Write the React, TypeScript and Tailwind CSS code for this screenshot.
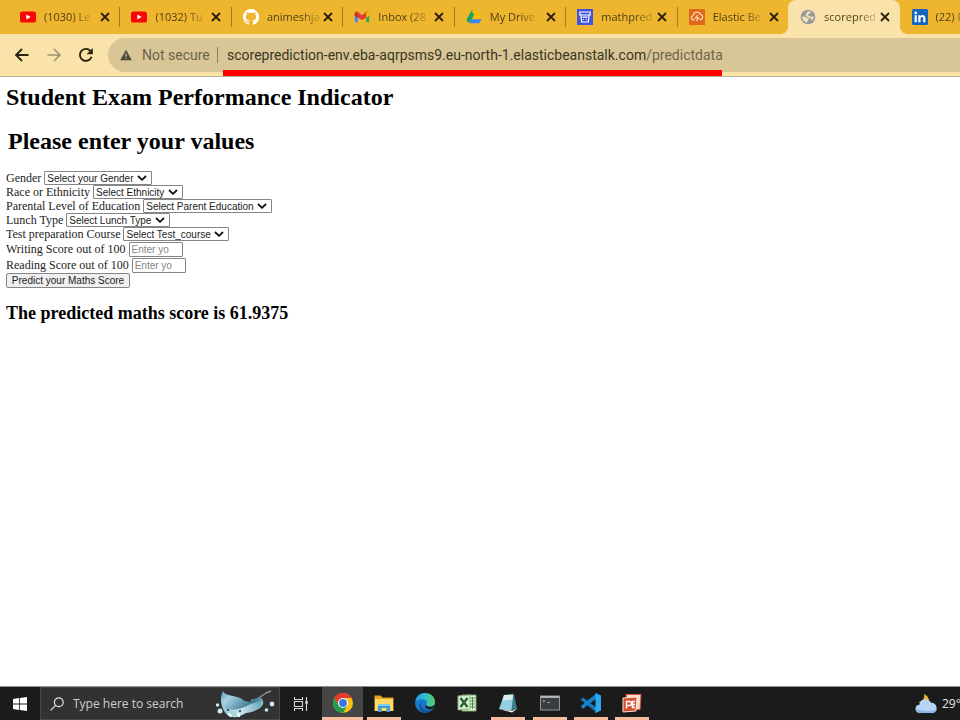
import type { ReactNode } from "react";

const ui = "font-['Open_Sans','Noto_Sans',sans-serif]";

function YouTube() {
  return (
    <svg viewBox="0 0 16 16" className="size-4">
      <rect y="2.5" width="16" height="11" rx="2.6" fill="#f90506" />
      <path d="M6.3 5.6v4.8L10.7 8z" fill="#fff" />
    </svg>
  );
}

function GitHub() {
  return (
    <svg viewBox="0 0 16 16" className="size-4">
      <path
        fill="#fff"
        d="M8 0C3.58 0 0 3.58 0 8c0 3.54 2.29 6.53 5.47 7.59.4.07.55-.17.55-.38 0-.19-.01-.82-.01-1.49-2.01.37-2.53-.49-2.69-.94-.09-.23-.48-.94-.82-1.13-.28-.15-.68-.52-.01-.53.63-.01 1.08.58 1.23.82.72 1.21 1.87.87 2.33.66.07-.52.28-.87.51-1.07-1.78-.2-3.64-.89-3.64-3.95 0-.87.31-1.59.82-2.15-.08-.2-.36-1.02.08-2.12 0 0 .67-.21 2.2.82.64-.18 1.32-.27 2-.27s1.36.09 2 .27c1.53-1.04 2.2-.82 2.2-.82.44 1.1.16 1.92.08 2.12.51.56.82 1.27.82 2.15 0 3.07-1.87 3.75-3.65 3.95.29.25.54.73.54 1.48 0 1.07-.01 1.93-.01 2.2 0 .21.15.46.55.38A8.01 8.01 0 0 0 16 8c0-4.42-3.58-8-8-8z"
      />
    </svg>
  );
}

function Gmail() {
  return (
    <svg viewBox="0 0 16 16" className="size-4">
      <path d="M.8 4v9.3h3V7z" fill="#4285f4" />
      <path d="M15.2 4v9.3h-3V7z" fill="#34a853" />
      <path d="M.8 4.1C.8 2.4 2.5 2 3.6 2.8L8 6.2l4.4-3.4c1.1-.8 2.8-.4 2.8 1.3l-3 .8v3.8L8 11 3.8 8.7V5z" fill="#e03a32" />
      <path d="M.8 4v2.4l3 2.3V5z" fill="#c5221f" />
      <path d="M12.2 5v3.7l3-2.3V4.1c0-1.4-1.3-1.9-2.4-1.5z" fill="#fbbc04" />
    </svg>
  );
}

function Drive() {
  return (
    <svg viewBox="0 0 16 16" className="size-4">
      <path d="M5.5 1.6h4.8L4 13.6 1.3 12.8.5 10.5z" fill="#1ca55b" />
      <path d="M5.5 1.6h4.8l5.4 9H11z" fill="#fbbc04" />
      <path d="M5.3 10.2h10.4l-2.4 4.1H3z" fill="#3c84ee" />
    </svg>
  );
}

function Bucket() {
  return (
    <svg viewBox="0 0 16 16" className="size-4">
      <rect width="16" height="16" fill="#4354dc" />
      <path d="M2.8 3h10.4v3H2.8zM4 6l.6 7h6.8l.6-7M5.5 8.2h5M6 10.5h1m2 0h1" fill="none" stroke="#fff" strokeWidth="1.2" />
    </svg>
  );
}

function Beanstalk() {
  return (
    <svg viewBox="0 0 16 16" className="size-4">
      <rect width="16" height="16" fill="#df681c" />
      <path d="M5.5 11H5a2.3 2.3 0 0 1-.8-4.5 3.8 3.8 0 0 1 7.3-1 2.6 2.6 0 0 1 .5 5h-1.5M8.8 6.2 6.6 8.8h2.8l-2 3.2" fill="none" stroke="#ffd9b9" strokeWidth="1.3" />
    </svg>
  );
}

function Globe() {
  return (
    <svg viewBox="0 0 16 16" className="size-4">
      <circle cx="8" cy="8" r="7.3" fill="#98999b" />
      <path d="M2.2 7.6c1.8-.4 3.4-.2 4.3.8.9 1 2.3.4 2.6 1.4.3 1-1.1 1.2-1.4 2.1-.2.8-.5 1.4-1.2 1.6C3.6 12.9 2 10.4 2.2 7.6zM8 2.3c1.2-.1 2.3.2 3.2.8-.2 1.2-1.6.8-2 1.7-.4.8-1.5.7-1.6 1.6 1.3.2 2.4.2 3 1.2.8.5 1.8.2 3-.3.1 1.7-.4 3-1.6 4.1-.8-.4-.4-1.6-1.2-2.1-1.2-.6-2.8-.3-3.5-1.3-.7-1-2-1-1.8-2.2C5.7 4.5 7.2 4 8 2.3z" fill="#f3e3b5" />
    </svg>
  );
}

function LinkedIn() {
  return (
    <svg viewBox="0 0 16 16" className="size-4">
      <rect width="16" height="16" rx="1.5" fill="#1565c0" />
      <path d="M2.6 6.2h2.2v7H2.6zM6.3 6.2h2.1v1c1-1.8 5-1.8 5 1.9v4.1h-2.2V9.6c0-2.2-2.7-2-2.7 0v3.6H6.3z" fill="#fff" />
      <circle cx="3.7" cy="3.9" r="1.3" fill="#fff" />
    </svg>
  );
}

const tabs: { title: string; icon: ReactNode; divider?: boolean; active?: boolean }[] = [
  { title: "(1030) Le", icon: <YouTube />, divider: true },
  { title: "(1032) Tu", icon: <YouTube />, divider: true },
  { title: "animeshja", icon: <GitHub />, divider: true },
  { title: "Inbox (28", icon: <Gmail />, divider: true },
  { title: "My Drive", icon: <Drive />, divider: true },
  { title: "mathpred", icon: <Bucket />, divider: true },
  { title: "Elastic Be", icon: <Beanstalk /> },
  { title: "scorepred", icon: <Globe />, active: true },
  { title: "(22) F", icon: <LinkedIn /> },
];

function TabStrip() {
  return (
    <nav aria-label="Tabs" className="h-[34px] overflow-hidden bg-[#eeb62f]">
      <div className="ml-2 grid h-full w-[1003px] grid-cols-9">
        {tabs.map((t) => (
          <div
            key={t.title}
            className={`relative flex items-center pl-3 ${t.active ? "rounded-t-lg bg-[#fae3aa]" : ""}`}
          >
            {t.active && (
              <>
                <span className="absolute bottom-0 -left-2 size-2 bg-[radial-gradient(circle_at_0_0,#eeb62f_8px,#fae3aa_8px)]" />
                <span className="absolute -right-2 bottom-0 size-2 bg-[radial-gradient(circle_at_100%_0,#eeb62f_8px,#fae3aa_8px)]" />
              </>
            )}
            <span className="shrink-0">{t.icon}</span>
            <span className="ml-2 w-12 text-[11px] whitespace-nowrap">
              <span className="bg-[linear-gradient(to_right,#4a3b14_65%,#4a3b1440)] bg-clip-text text-transparent">
                {t.title}
              </span>
            </span>
            <button aria-label={`Close ${t.title}`} className="ml-2">
              <svg viewBox="0 0 10 10" className="size-[10px]">
                <path d="m1 1 8 8m0-8L1 9" stroke="#2b210a" strokeWidth="1.8" />
              </svg>
            </button>
            {t.divider && <span className="absolute -right-px h-5 w-px bg-[#a27c23]" />}
          </div>
        ))}
      </div>
    </nav>
  );
}

function Toolbar() {
  return (
    <header className="flex h-[43px] items-center overflow-hidden border-b border-[#bcb195] bg-[#fae3aa] pl-[14px]">
      <div className="flex w-[94px] gap-4">
        <button aria-label="Back">
          <svg viewBox="0 0 16 16" className="size-4" fill="none" stroke="#29230f" strokeWidth="1.8">
            <path d="M14.5 8H2.5M8 2 2 8l6 6" />
          </svg>
        </button>
        <button aria-label="Forward">
          <svg viewBox="0 0 16 16" className="size-4" fill="none" stroke="#a09373" strokeWidth="1.6">
            <path d="M1.5 8h12M8 2l6 6-6 6" />
          </svg>
        </button>
        <button aria-label="Reload">
          <svg viewBox="0 0 16 16" className="size-4" fill="none" stroke="#29230f" strokeWidth="1.9">
            <path d="M13.6 9.8A6 6 0 1 1 12.4 3.9L14 5.6" />
            <path d="M14.8 1v6.2H8.6z" fill="#29230f" stroke="none" />
          </svg>
        </button>
      </div>
      <div className="relative flex h-[34px] flex-1 items-center rounded-l-full bg-[#d8c697] pl-3 font-[Roboto,sans-serif] text-sm whitespace-nowrap">
        <svg viewBox="0 0 12 12" className="size-3">
          <path d="M6 .8 11.8 11.3H.2z" fill="#4e4939" />
          <path d="M6 4.5v3M6 8.5v1.3" stroke="#d8c697" strokeWidth="1.2" />
        </svg>
        <span className="ml-[10px] w-[67px] text-[#6b634c]">Not secure</span>
        <span className="ml-2 h-4 w-px bg-[#8c8263]" />
        <span className="ml-[9px] text-[#3c3622]">
          scoreprediction-env.eba-aqrpsms9.eu-north-1.elasticbeanstalk.com
          <span className="text-[#70674d]">/predictdata</span>
        </span>
        <span className="absolute -bottom-1 left-[115px] h-[6px] w-[499px] bg-[#fe0000]" />
      </div>
    </header>
  );
}

function SelectRow({ id, label, text, width }: { id: string; label: string; text: string; width: string }) {
  return (
    <div className="flex h-[14px] items-center gap-[3px]">
      <label htmlFor={id}>{label}</label>
      <span className={`relative ${width}`}>
        <select
          id={id}
          className="block h-[14px] w-full appearance-none rounded-[1px] border border-[#858585] bg-white pt-px pl-[2px] font-['Liberation_Sans',sans-serif] text-[10px] leading-3 text-[#222]"
        >
          <option>{text}</option>
        </select>
        <svg viewBox="0 0 10 6" className="pointer-events-none absolute top-1 right-[5px] h-[6px] w-[10px]">
          <path d="m1 1 4 3.8L9 1" fill="none" stroke="#111" strokeWidth="1.8" />
        </svg>
      </span>
    </div>
  );
}

function ScoreRow({ id, label }: { id: string; label: string }) {
  return (
    <div className="flex h-4 items-center gap-[3px]">
      <label htmlFor={id}>{label}</label>
      <input
        id={id}
        placeholder="Enter yo"
        className="h-[15px] w-[54px] rounded-[1px] border border-[#858585] bg-white pl-[2px] font-['Liberation_Sans',sans-serif] text-[10px] placeholder:text-[#858585]"
      />
    </div>
  );
}

function Page() {
  return (
    <main className="flex-1 bg-white px-[6px] font-['Liberation_Serif',serif] text-xs text-[#1c1c1c]">
      <h1 className="pt-[5px] text-2xl leading-[30px] font-bold text-black">Student Exam Performance Indicator</h1>
      <h2 className="mt-[14px] pl-[2px] text-2xl leading-[30px] font-bold text-black">Please enter your values</h2>
      <form className="mt-[15px]" onSubmit={(e) => e.preventDefault()}>
        <SelectRow id="gender" label="Gender" text="Select your Gender" width="w-[108px]" />
        <SelectRow id="race" label="Race or Ethnicity" text="Select Ethnicity" width="w-[90px]" />
        <SelectRow id="education" label="Parental Level of Education" text="Select Parent Education" width="w-[129px]" />
        <SelectRow id="lunch" label="Lunch Type" text="Select Lunch Type" width="w-[104px]" />
        <SelectRow id="course" label="Test preparation Course" text="Select Test_course" width="w-[106px]" />
        <ScoreRow id="writing" label="Writing Score out of 100" />
        <ScoreRow id="reading" label="Reading Score out of 100" />
        <button className="block h-[15px] w-[124px] rounded-[2px] border border-[#858585] bg-[#efefef] font-['Liberation_Sans',sans-serif] text-[10px] leading-3 whitespace-nowrap">
          Predict your Maths Score
        </button>
      </form>
      <h3 className="mt-[13px] text-lg leading-6 font-bold text-black">The predicted maths score is 61.9375</h3>
    </main>
  );
}

function Ray() {
  return (
    <svg viewBox="0 0 60 30" className="h-[30px] w-[60px]">
      <defs>
        <linearGradient id="ray" x1="0" y1="0" x2="1" y2=".6">
          <stop offset="0" stopColor="#5f9cb8" />
          <stop offset=".25" stopColor="#a4d3e0" />
          <stop offset=".5" stopColor="#6fa3b6" />
          <stop offset=".75" stopColor="#3f7a90" />
          <stop offset="1" stopColor="#a9dbe6" />
        </linearGradient>
        <linearGradient id="belly" x1="0" y1="0" x2="1" y2="0">
          <stop offset="0" stopColor="#9fd0dc" />
          <stop offset=".5" stopColor="#e8fafc" />
          <stop offset="1" stopColor="#5fa3b5" />
        </linearGradient>
      </defs>
      <path d="M36 11c9 1 9-6 20-9" fill="none" stroke="#8a9ca2" strokeWidth="1.3" />
      <path d="M8 2c3 6 13 4 19 8 3 3 8 4 12 1 3-3 8-4 9 1 2 6-8 11-17 12-5 2-7 5-13 4-6 0-9-5-11-11C5 11 6 7 8 2z" fill="url(#ray)" />
      <path d="M8 18c4 3 10 3 15 2 7-1 11-5 16-6 4-1 6 0 8 1-2 5-9 8-16 9-5 2-7 5-13 4-5 0-8-4-10-10z" fill="url(#belly)" opacity=".8" />
      <path d="m14 25 2 2m7-2 1 2" fill="none" stroke="#e8ffff" strokeWidth="2.4" strokeLinecap="round" />
      <circle cx="13" cy="21" r="1.1" fill="#173f50" />
      <circle cx="25" cy="22" r="1.1" fill="#173f50" />
      <g fill="#c6edf5">
        <circle cx="2.5" cy="16" r="1.7" />
        <circle cx="5" cy="22" r="2.5" />
        <circle cx="57" cy="15" r="2.4" />
        <circle cx="51.5" cy="21" r="1.8" />
      </g>
    </svg>
  );
}

const icon = "size-[22px]";

function Chrome() {
  return (
    <svg viewBox="0 0 22 22" className={icon}>
      <circle cx="11" cy="11" r="10" fill="#fbc116" />
      <path d="M2.3 6A10 10 0 0 1 19.7 6H11l-4.3 7.5z" fill="#e33b2e" />
      <path d="M2.3 6A10 10 0 0 0 11 21l4.3-7.5H6.7z" fill="#259b48" />
      <circle cx="11" cy="11" r="5" fill="#fff" />
      <circle cx="11" cy="11" r="3.9" fill="#3478e5" />
    </svg>
  );
}

function Explorer() {
  return (
    <svg viewBox="0 0 22 22" className={icon}>
      <path d="M1.5 3.5h6l2 2h11V19h-19z" fill="#e9a51e" />
      <path d="M2 7h18v12H2z" fill="#ffd866" />
      <path d="M5 12h12v8h-3.5v-4h-5v4H5z" fill="#3e9bd5" />
      <path d="M5 12h12v2H5z" fill="#7ccbe9" />
    </svg>
  );
}

function Edge() {
  return (
    <svg viewBox="0 0 22 22" className={icon}>
      <defs>
        <linearGradient id="edge">
          <stop stopColor="#1e9ce0" />
          <stop offset=".5" stopColor="#31bfd0" />
          <stop offset="1" stopColor="#59ce5a" />
        </linearGradient>
      </defs>
      <circle cx="11" cy="11" r="10" fill="#1979c9" />
      <path d="M1.2 9.5C2 4.5 6 1 11 1c6 0 10 4.3 10 8.8 0 3.3-2.5 5-5.2 5-3 0-4-1.2-3.5-2.2 2-3-1-5.3-4-5.3-3 0-5.6 1-7.1 2.2z" fill="url(#edge)" />
      <path d="M7.8 9.5C5.7 13 8.4 18 13 18.2c2.3.1 4.7-.8 6-1.6-2 3-5.3 4.8-9 4.3C5.5 19.5 3.5 13 7.8 9.5z" fill="#12539e" />
      <path d="M12.3 12.6c-.5 1 .5 2.2 3.5 2.2 1.9 0 3.7-.8 4.6-2.1l-.6 3.1c-1.4 1-3.3 1.6-5.3 1.4-3-.4-4.4-2.6-2.2-4.6z" fill="#1b1b1b" />
    </svg>
  );
}

function Excel() {
  return (
    <svg viewBox="0 0 22 22" className={icon}>
      <path d="M6 3h14v16H6z" fill="#e9f5e3" stroke="#72a568" />
      <path d="M14 6h5M14 9h5M14 12h5M14 15h5M16.5 5v12" stroke="#4f8b47" />
      <path d="m2 4 12-1v14L2 18z" fill="#d9ecd1" stroke="#8ab57e" />
      <path d="m4.5 6 7 9m0-9-7 9" stroke="#28652d" strokeWidth="2.4" />
    </svg>
  );
}

function Notepad() {
  return (
    <svg viewBox="0 0 22 22" className={icon}>
      <path d="m7 3 10-1 3 15-4 2z" fill="#3d7b89" />
      <path d="M7 3h9l-1.5 16L2 17z" fill="#94d0df" />
      <path d="m7 3 9-.5-.5 5-10 1z" fill="#d8edf0" />
      <path d="m2 17 12.5 2L20 17l-5 3.5z" fill="#f4f5e7" />
    </svg>
  );
}

function Terminal() {
  return (
    <svg viewBox="0 0 22 22" className={icon}>
      <rect x="1.5" y="4" width="19" height="14" fill="#3a3d3f" stroke="#92999c" />
      <path d="M2 5h18" stroke="#c2c7c9" strokeWidth="1.7" />
      <path d="m4 8 2 1-2 1m4 .5h3" fill="none" stroke="#9a9fa1" />
    </svg>
  );
}

function Code() {
  return (
    <svg viewBox="0 0 22 22" className={icon}>
      <path d="m1 7 2-1.6L17 16v5L1.2 8.3z" fill="#1379bc" />
      <path d="m1 15 2 1.7L17 6V1L1.2 13.8z" fill="#1682ca" />
      <path d="m15.5 1 5.5 2.5v15L15.5 21z" fill="#30a8f0" />
    </svg>
  );
}

function PowerPoint() {
  return (
    <svg viewBox="0 0 22 22" className={icon}>
      <path d="M5 2.500h15l-1 15H7z" fill="#f8d9cc" stroke="#d75a38" />
      <path d="m2 6 14-1-1 14-13 1z" fill="#d34f2e" stroke="#ffe3d8" />
      <path d="M5.500 16.500V9.500h3a2 2 0 0 1 0 4h-3M14 9.500h-2.500v6H14M11.500 12.500H14" fill="none" stroke="#fff" strokeWidth="1.5" />
    </svg>
  );
}

const apps: { name: string; art: ReactNode; running?: boolean; focused?: boolean }[] = [
  { name: "Chrome", art: <Chrome />, running: true, focused: true },
  { name: "File Explorer", art: <Explorer />, running: true },
  { name: "Edge", art: <Edge /> },
  { name: "Excel", art: <Excel /> },
  { name: "Notepad", art: <Notepad />, running: true },
  { name: "Terminal", art: <Terminal />, running: true },
  { name: "Visual Studio Code", art: <Code />, running: true },
  { name: "PowerPoint", art: <PowerPoint />, running: true },
];

function Taskbar() {
  return (
    <footer className="flex h-[34px] overflow-hidden border-t border-[#8e8e8e] bg-[#1b1b1b] text-[#e6e6e6]">
      <button aria-label="Start" className="flex w-10 items-center justify-center">
        <svg viewBox="0 0 14 14" className="size-[14px]" fill="#fff">
          <path d="M0 2l6-.9v5.5H0zM6.8 1 14 0v6.6H6.8zM0 7.4h6v5.5L0 12zM6.8 7.4H14V14l-7.2-1z" />
        </svg>
      </button>
      <div className="flex w-60 items-center border border-[#484848] bg-[#323232] pl-[9px]">
        <svg viewBox="0 0 14 14" className="size-[14px]" fill="none" stroke="#e6e6e6" strokeWidth="1.2">
          <circle cx="8.8" cy="5.2" r="4.4" />
          <path d="M5.7 8.3.6 13.4" />
        </svg>
        <input
          aria-label="Search"
          placeholder="Type here to search"
          className="ml-[9px] w-[142px] text-xs placeholder:text-[#cfcfcf]"
        />
        <Ray />
      </div>
      <button aria-label="Task view" className="flex w-[42px] items-center justify-center">
        <svg viewBox="0 0 16 16" className="size-4" fill="none" stroke="#d6d6d6" strokeWidth="1.1">
          <path d="M1.5 1v2.5h8V1M1.5 5.5h8v5h-8zM1.5 15v-2.5h8V15M13.5 1v14" />
          <path d="M12.3 5h2.4v3h-2.4z" fill="#d6d6d6" stroke="none" />
        </svg>
      </button>
      <div className="grid w-[331px] grid-cols-8">
        {apps.map((a) => (
          <button
            key={a.name}
            aria-label={a.name}
            className={`flex flex-col items-center justify-between pt-[5px] ${a.focused ? "bg-[#454545]" : ""}`}
          >
            {a.art}
            {a.running && <span className={`h-[3px] bg-[#f5bd9e] ${a.focused ? "w-full" : "w-[34px]"}`} />}
          </button>
        ))}
      </div>
      <div className="ml-auto flex w-[45px] items-center gap-[5px] text-xs whitespace-nowrap">
        <svg viewBox="0 0 22 22" className="size-[22px] shrink-0">
          <path d="M9 1c1 4-1 7-5 8 1 3 6 4 9 1 2-2 1-7-4-9z" fill="#efb237" />
          <path d="M5 20a4.3 4.3 0 0 1-.4-8.6A6 6 0 0 1 16 9.8 5 5 0 0 1 17 20z" fill="#b7d3f5" />
          <path d="M1 16a4.3 4.3 0 0 0 4 4h12a5 5 0 0 0 4.8-4c-5 3-15 2-20.8 0z" fill="#8eb7e9" />
        </svg>
        29°
      </div>
    </footer>
  );
}

export default function App() {
  return (
    <div className={`flex min-h-screen flex-col overflow-hidden ${ui}`}>
      <TabStrip />
      <Toolbar />
      <Page />
      <Taskbar />
    </div>
  );
}
